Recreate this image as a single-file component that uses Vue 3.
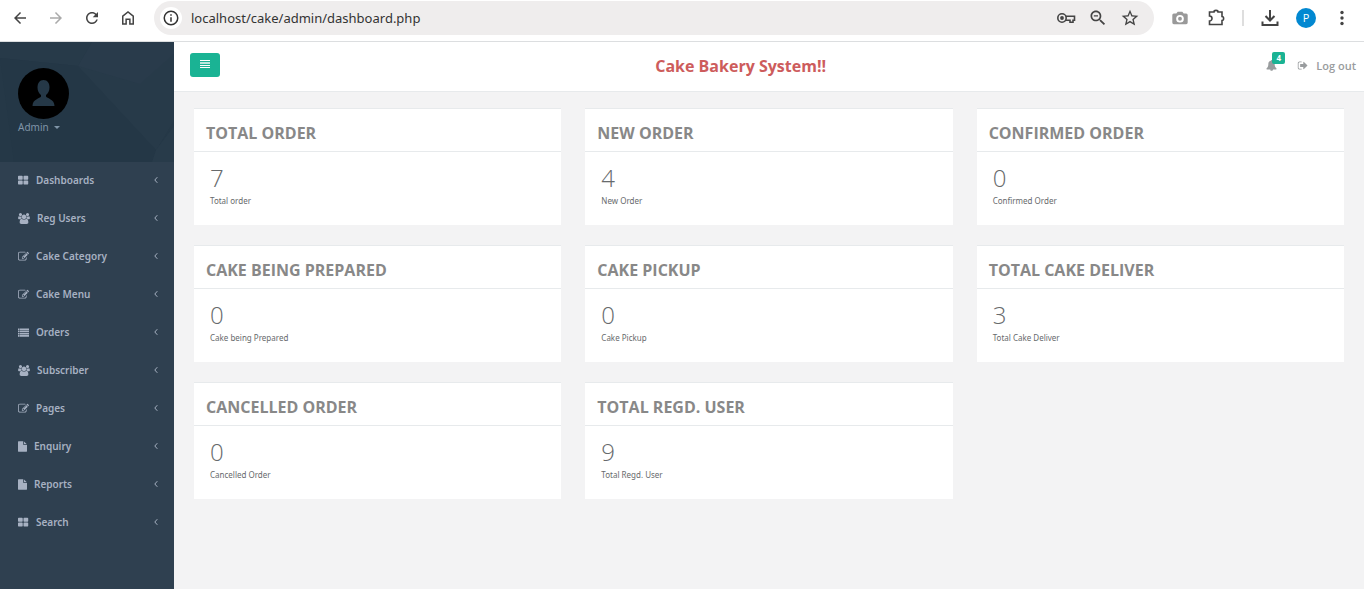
<script setup>
const icons = {
  grid: { box: '64 0 1792 1792', size: 'w11', d: 'M832 1024v384q0 52-38 90t-90 38h-512q-52 0-90-38t-38-90v-384q0-52 38-90t90-38h512q52 0 90 38t38 90zm0-768v384q0 52-38 90t-90 38h-512q-52 0-90-38t-38-90v-384q0-52 38-90t90-38h512q52 0 90 38t38 90zm896 768v384q0 52-38 90t-90 38h-512q-52 0-90-38t-38-90v-384q0-52 38-90t90-38h512q52 0 90 38t38 90zm0-768v384q0 52-38 90t-90 38h-512q-52 0-90-38t-38-90v-384q0-52 38-90t90-38h512q52 0 90 38t38 90z' },
  users: { box: '64 0 1920 1792', size: 'w12', d: 'M657 896q-162 5-265 128h-134q-82 0-138-40.5t-56-118.5q0-353 124-353 6 0 43.5 21t97.5 42.5 119 21.5q67 0 133-23-5 37-5 66 0 143 83 256zm1071 637q0 120-73 189.5t-194 69.5h-874q-121 0-194-69.5t-73-189.5q0-53 3.5-103.5t14-109 26.5-108.5 43-97.5 62-81 85.5-53.5 111.5-20q10 0 43 21.5t73 48 107 48 135 21.5 135-21.5 107-48 73-48 43-21.5q61 0 111.5 20t85.5 53.5 62 81 43 97.5 26.5 108.5 14 109 3.5 103.5zm-1024-1277q0 106-75 181t-181 75-181-75-75-181 75-181 181-75 181 75 75 181zm704 384q0 159-112.5 271.5t-271.5 112.5-271.5-112.5-112.5-271.5 112.5-271.5 271.5-112.5 271.5 112.5 112.5 271.5zm576 225q0 78-56 118.5t-138 40.5h-134q-103-123-265-128 81-113 81-256 0-29-5-66 66 23 133 23 59 0 119-21.5t97.5-42.5 43.5-21q124 0 124 353zm-128-609q0 106-75 181t-181 75-181-75-75-181 75-181 181-75 181 75 75 181z' },
  edit: { box: '0 0 1792 1792', size: 'w11', d: 'M888 1184l116-116-152-152-116 116v56h96v96h56zm440-720q-16-16-33 1l-350 350q-17 17-1 33t33-1l350-350q17-17 1-33zm80 594v190q0 119-84.5 203.5t-203.5 84.5h-832q-119 0-203.5-84.5t-84.5-203.5v-832q0-119 84.5-203.5t203.5-84.5h832q63 0 117 25 15 7 18 23 3 17-9 29l-49 49q-14 14-32 8-23-6-45-6h-832q-66 0-113 47t-47 113v832q0 66 47 113t113 47h832q66 0 113-47t47-113v-126q0-13 9-22l64-64q15-15 35-7t20 29zm-96-738l288 288-672 672h-288v-288zm444 132l-92 92-288-288 92-92q28-28 68-28t68 28l152 152q28 28 28 68t-28 68z' },
  list: { box: '0 0 1792 1792', size: 'w11', d: 'M0 256h256v256h-256zM0 608h256v256h-256zM0 960h256v256h-256zM0 1312h256v256h-256zM320 256h1472v256h-1472zM320 608h1472v256h-1472zM320 960h1472v256h-1472zM320 1312h1472v256h-1472z' },
  file: { box: '128 0 1536 1792', size: 'w9', d: 'M1152 512v-472q22 14 36 28l408 408q14 14 28 36h-472zm-128 32q0 40 28 68t68 28h544v1056q0 40-28 68t-68 28h-1344q-40 0-68-28t-28-68v-1600q0-40 28-68t68-28h800v544z' },
}
const menu = [
  ['Dashboards', 'grid'], ['Reg Users', 'users'], ['Cake Category', 'edit'], ['Cake Menu', 'edit'],
  ['Orders', 'list'], ['Subscriber', 'users'], ['Pages', 'edit'], ['Enquiry', 'file'],
  ['Reports', 'file'], ['Search', 'grid'],
].map(([label, icon]) => ({ label, icon: icons[icon] }))

const cards = [
  { title: 'TOTAL ORDER', value: 7, note: 'Total order' },
  { title: 'NEW ORDER', value: 4, note: 'New Order' },
  { title: 'CONFIRMED ORDER', value: 0, note: 'Confirmed Order' },
  { title: 'CAKE BEING PREPARED', value: 0, note: 'Cake being Prepared' },
  { title: 'CAKE PICKUP', value: 0, note: 'Cake Pickup' },
  { title: 'TOTAL CAKE DELIVER', value: 3, note: 'Total Cake Deliver' },
  { title: 'CANCELLED ORDER', value: 0, note: 'Cancelled Order' },
  { title: 'TOTAL REGD. USER', value: 9, note: 'Total Regd. User' },
]
</script>

<template>
  <div class="window">
    <header class="browser">
      <div class="nav">
        <button class="tool" aria-label="Back"><svg viewBox="0 0 24 24"><path d="M20 11H7.830l5.590-5.590L12 4l-8 8 8 8 1.410-1.410L7.830 13H20v-2z" /></svg></button>
        <button class="tool dim" aria-label="Forward"><svg viewBox="0 0 24 24"><path d="M12 4l-1.410 1.410L16.170 11H4v2h12.170l-5.580 5.590L12 20l8-8z" /></svg></button>
        <button class="tool" aria-label="Reload"><svg viewBox="0 0 24 24"><path d="M17.650 6.350C16.200 4.900 14.210 4 12 4c-4.420 0-7.990 3.580-7.990 8s3.570 8 7.990 8c3.730 0 6.840-2.550 7.730-6h-2.080c-.82 2.330-3.040 4-5.650 4-3.310 0-6-2.690-6-6s2.690-6 6-6c1.660 0 3.140.69 4.220 1.780L13 11h7V4l-2.350 2.350z" /></svg></button>
        <button class="tool" aria-label="Home"><svg viewBox="0 0 24 24"><path class="line" d="M5 20V9.500L12 4l7 5.500V20h-4.500v-6.500h-5V20z" /></svg></button>
      </div>
      <div class="omnibox">
        <button class="info" aria-label="Site information"><svg viewBox="0 0 24 24"><path d="M11 7h2v2h-2zm0 4h2v6h-2z" /><circle class="line" cx="12" cy="12" r="9" /></svg></button>
        <input class="url" type="text" aria-label="Address" value="localhost/cake/admin/dashboard.php" />
        <div class="page-tools">
          <button class="tool" aria-label="Passwords"><svg viewBox="0 0 20 20"><circle class="line thin" cx="6" cy="10" r="4.200" /><circle cx="6" cy="10" r="1.900" /><path class="line thin" d="M10 8.200h8.500v4H17v2h-3v-2h-4" /></svg></button>
          <button class="tool" aria-label="Zoom"><svg viewBox="0 0 24 24"><path d="M15.500 14h-.79l-.28-.27C15.410 12.590 16 11.110 16 9.500 16 5.910 13.090 3 9.500 3S3 5.910 3 9.500 5.910 16 9.500 16c1.610 0 3.090-.59 4.230-1.570l.27.28v.79l5 4.990L20.490 19l-4.990-5zm-6 0C7.010 14 5 11.990 5 9.500S7.010 5 9.500 5 14 7.010 14 9.500 11.990 14 9.500 14zM7 8.700h5v1.600H7z" /></svg></button>
          <button class="tool" aria-label="Bookmark"><svg viewBox="0 0 24 24"><path d="M22 9.240l-7.190-.62L12 2 9.190 8.630 2 9.240l5.460 4.730L5.820 21 12 17.270 18.180 21l-1.630-7.030L22 9.240zM12 15.400l-3.760 2.270 1-4.280-3.320-2.880 4.380-.38L12 6.100l1.710 4.040 4.380.38-3.320 2.880 1 4.280L12 15.400z" /></svg></button>
        </div>
      </div>
      <div class="extras">
        <button class="tool grey" aria-label="Screenshot"><svg viewBox="-1 -1 26 26"><path fill-rule="evenodd" d="M9 4l-1.800 2H4a2 2 0 0 0-2 2v10a2 2 0 0 0 2 2h16a2 2 0 0 0 2-2V8a2 2 0 0 0-2-2h-3.200L15 4zM12 8a5 5 0 1 1 0 10 5 5 0 0 1 0-10zm0 2.500a2.500 2.500 0 1 0 0 5 2.500 2.500 0 0 0 0-5z" /></svg></button>
        <button class="tool" aria-label="Extensions"><svg viewBox="0 0 20 20"><path class="line thin" d="M3.500 4H8a2 1.600 0 0 1 4 0h4v4.500a1.600 2 0 0 1 0 4V16.500H3.500V13a2.500 2.500 0 0 0 0-5z" /></svg></button>
        <span class="divider"></span>
        <button class="tool" aria-label="Downloads"><svg viewBox="0 0 20 20"><path class="line" d="M10 2v10M5.500 8l4.500 4.500L14.500 8M2.500 13.500V17h15v-3.500" /></svg></button>
        <button class="person" aria-label="Profile">P</button>
        <button class="tool" aria-label="Menu"><svg viewBox="0 0 20 20"><circle cx="10" cy="4.500" r="1.700" /><circle cx="10" cy="10" r="1.700" /><circle cx="10" cy="15.500" r="1.700" /></svg></button>
      </div>
    </header>

    <div class="app">
      <aside class="sidebar">
        <div class="profile">
          <svg class="pattern" viewBox="0 0 174 120" preserveAspectRatio="none">
            <path fill="#273a49" d="M0 0H92L78 24 0 16z" />
            <path fill="#293b4b" d="M92 0H174V78L156 108 78 24z" />
            <path fill="#273a49" d="M78 24L140 42 174 12V78L156 108z" />
            <path fill="#243746" d="M0 16L78 24 156 108 152 120H14z" />
            <path fill="#283b4a" d="M156 108L174 84V120H152z" />
          </svg>
          <svg class="avatar" viewBox="0 0 51 51">
            <circle cx="25.500" cy="25.500" r="25.500" />
            <path fill="#253847" d="M25.500 12c-4 0-6 3.200-6 7.500 0 3.500 1.600 6 3.500 7.500v1.500c-1 2-8.500 2.500-8.500 9.500h22c0-7-7.500-7.500-8.500-9.500V27c1.900-1.500 3.500-4 3.500-7.500 0-4.300-2-7.500-6-7.500z" />
          </svg>
          <button class="account">Admin <span class="caret"></span></button>
        </div>
        <nav>
          <a v-for="item in menu" :key="item.label" href="#" class="item">
            <svg class="glyph" :class="item.icon.size" :viewBox="item.icon.box"><path :d="item.icon.d" /></svg>
            <span class="label">{{ item.label }}</span>
            <svg class="angle" viewBox="0 0 4 8"><path d="M3.300 1.200L.8 4l2.500 2.800" /></svg>
          </a>
        </nav>
      </aside>

      <div class="main">
        <div class="topbar">
          <button class="toggle" aria-label="Toggle menu"><svg viewBox="0 0 10 9"><path d="M0 0h10v1H0zM0 5h10v1H0zM0 7h10v1H0z" /><path opacity=".7" d="M0 2h10v2H0z" /></svg></button>
          <h1>Cake Bakery System!!</h1>
          <div class="actions">
            <a href="#" class="bell" aria-label="Notifications">
              <svg viewBox="0 0 1792 1792"><path d="M912 1696q0-16-16-16-59 0-101.500-42.500t-42.500-101.500q0-16-16-16t-16 16q0 73 51.500 124.500t124.500 51.500q16 0 16-16zm816-288q0 52-38 90t-90 38h-448q0 106-75 181t-181 75-181-75-75-181h-448q-52 0-90-38t-38-90q50-42 91-88t85-119.500 74.500-158.500 50-206 19.500-260q0-152 117-282.500t307-158.500q-8-19-8-39 0-40 28-68t68-28 68 28 28 68q0 20-8 39 190 28 307 158.500t117 282.500q0 139 19.500 260t50 206 74.500 158.500 85 119.500 91 88z" /></svg>
              <span class="badge">4</span>
            </a>
            <a href="#" class="logout">
              <svg viewBox="0 0 1664 1792"><path d="M704 1440q0 4 1 20t.5 26.500-3 23.500-10 19.500-20.500 6.500h-320q-119 0-203.500-84.500t-84.500-203.500v-704q0-119 84.500-203.500t203.500-84.500h320q13 0 22.500 9.500t9.500 22.500q0 4 1 20t.5 26.500-3 23.500-10 19.500-20.500 6.500h-320q-66 0-113 47t-47 113v704q0 66 47 113t113 47h312l11.500 1 11.500 3 8 5.500 7 9 2 13.500zm928-544q0 26-19 45l-544 544q-19 19-45 19t-45-19-19-45v-288h-448q-26 0-45-19t-19-45v-384q0-26 19-45t45-19h448v-288q0-26 19-45t45-19 45 19l544 544q19 19 19 45z" /></svg>
              Log out
            </a>
          </div>
        </div>
        <main class="cards">
          <section v-for="card in cards" :key="card.title" class="card">
            <h2>{{ card.title }}</h2>
            <div class="body">
              <div class="value">{{ card.value }}</div>
              <div class="note">{{ card.note }}</div>
            </div>
          </section>
        </main>
      </div>
    </div>
  </div>
</template>

<style>
body { margin: 0; }
</style>

<style scoped>
.window { display: flex; flex-direction: column; min-height: 100vh; font-family: "Open Sans", "Noto Sans", sans-serif; color: #676a6c; background: #fff; }
button { border: 0; padding: 0; background: none; font: inherit; color: inherit; cursor: pointer; }
a { color: inherit; text-decoration: none; }
svg { display: block; fill: currentColor; }
.line { fill: none; stroke: currentColor; stroke-width: 2; }
.thin { stroke-width: 1.6; }

.browser { display: flex; align-items: center; height: 42px; box-sizing: border-box; padding: 0 12px 5px 11px; border-bottom: 1px solid #dcdee0; color: #444; flex: none; }
.nav { display: flex; gap: 18px; margin-right: 17px; }
.tool { width: 20px; height: 20px; flex: none; }
.nav .tool { width: 18px; height: 18px; }
.tool svg { width: 100%; height: 100%; }
.dim { color: #aaa; }
.grey { color: #999; }
.omnibox { flex: 1; min-width: 0; display: flex; align-items: center; gap: 9px; height: 34px; padding: 0 14px 0 6px; border-radius: 17px; background: #efeded; }
.page-tools { display: flex; gap: 12px; }
.info { width: 22px; height: 22px; padding: 2px; border-radius: 50%; background: #fff; color: #333; box-sizing: border-box; }
.url { flex: 1; min-width: 0; border: 0; padding: 0; background: none; font: 13px "Noto Sans", sans-serif; color: #333; outline: 0; }
.extras { display: flex; align-items: center; gap: 16px; margin-left: 16px; }
.divider { width: 2px; height: 16px; background: #dedede; }
.person { width: 20px; height: 20px; border-radius: 50%; background: #0288d1; color: #fff; font-size: 11px; line-height: 20px; }

.app { flex: 1; display: flex; }
.sidebar { width: 174px; flex: none; background: #2f4050; color: #a7b1c2; font-family: "Noto Sans", sans-serif; }
.profile { position: relative; height: 120px; box-sizing: border-box; padding: 26px 18px 0; background: #253847; overflow: hidden; }
.pattern { position: absolute; inset: 0; width: 100%; height: 100%; }
.avatar { position: relative; width: 51px; height: 51px; fill: #000; }
.account { position: relative; display: flex; align-items: center; gap: 5px; font-size: 10px; line-height: 16px; color: #8095a8; }
.caret { border: 3px solid transparent; border-top-color: currentColor; border-bottom: 0; }
.item { display: flex; align-items: center; height: 36px; padding: 0 16px 2px 18px; font-size: 10px; font-weight: 600; }
.glyph { height: 11px; margin-right: 7px; }
.w11 { width: 11px; }
.w12 { width: 12px; }
.w9 { width: 9px; }
.label { flex: 1; }
.angle { width: 4px; height: 8px; }
.angle path { fill: none; stroke: currentColor; }

.main { flex: 1; min-width: 0; background: #f3f3f4; }
.topbar { display: flex; justify-content: space-between; align-items: center; height: 50px; box-sizing: border-box; padding: 0 8px 2px 16px; border-bottom: 1px solid #e7eaec; background: #fff; }
.toggle { width: 30px; height: 24px; margin-bottom: 2px; border-radius: 3px; background: #1ab394; color: #fff; }
.toggle svg { width: 10px; height: 9px; margin: 0 auto; }
h1 { margin: 0; font-size: 16px; line-height: 22px; font-weight: 700; color: #cd5c5c; }
.actions { display: flex; align-items: center; gap: 20px; padding-left: 5px; color: #999c9e; font-size: 11px; font-weight: 600; }
.bell { position: relative; }
.bell svg { width: 11px; height: 11px; }
.badge { position: absolute; left: 6px; top: -8px; width: 13px; height: 12px; border-radius: 2px; background: #1ab394; color: #fff; font-size: 8px; line-height: 12px; font-weight: 700; text-align: center; }
.logout { display: flex; align-items: center; gap: 8px; }
.logout svg { width: 11px; height: 11px; }

.cards { display: grid; grid-template-columns: repeat(3, 1fr); gap: 20px 24px; padding: 16px 20px; }
.card { background: #fff; border-top: 1px solid #e7eaec; }
h2 { margin: 0; padding: 13px 12px 7px; border-bottom: 1px solid #e7eaec; font-size: 16px; line-height: 22px; font-weight: 700; color: #888; }
.body { padding: 12px 16px 15px; }
.value { font-size: 24px; line-height: 28px; font-weight: 300; }
.note { font-family: "Noto Sans", sans-serif; font-size: 8px; line-height: 18px; }
</style>
